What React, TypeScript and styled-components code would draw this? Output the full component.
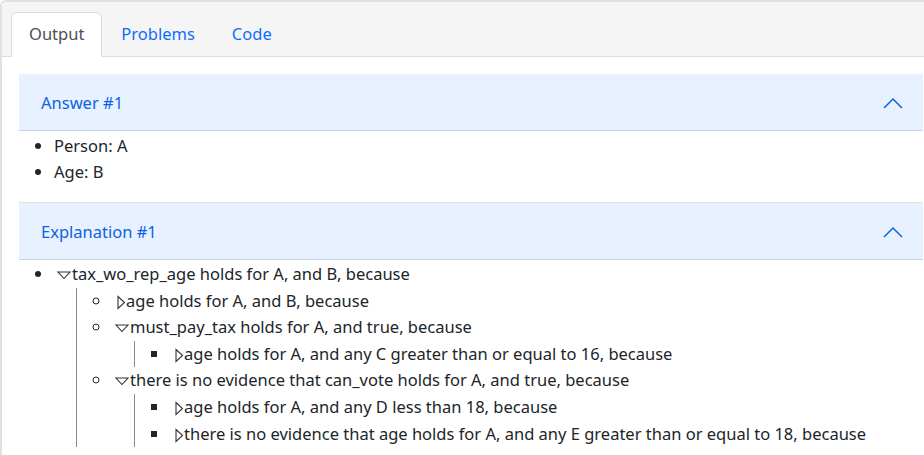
import React from "react";
import styled, { createGlobalStyle } from "styled-components";

const GlobalStyle = createGlobalStyle`
  html, body {
    margin: 0;
    padding: 0;
    background: #ffffff;
    overflow: hidden;
  }
  body {
    font-family: "Noto Sans", "Open Sans", sans-serif;
    font-size: 16.5px;
    color: #212529;
  }
  * { box-sizing: border-box; }
`;

const Card = styled.div`
  width: 942px;
  height: 455px;
  border: 2px solid #e1e1e1;
  border-bottom: 0;
  border-radius: 6px 6px 0 0;
  overflow: hidden;
  background: #ffffff;
`;

const TabBar = styled.div`
  display: flex;
  padding: 10px 9px 0;
  background: #f5f5f5;
  border-bottom: 1px solid #dcdcdc;
`;

const Tab = styled.div<{ $active?: boolean }>`
  padding: 9px 17px 10px;
  line-height: 24px;
  margin-bottom: -1px;
  margin-right: 1px;
  border: 1px solid ${(p) => (p.$active ? "#dcdcdc" : "transparent")};
  border-bottom-color: ${(p) => (p.$active ? "#ffffff" : "transparent")};
  border-radius: 6px 6px 0 0;
  background: ${(p) => (p.$active ? "#ffffff" : "transparent")};
  color: ${(p) => (p.$active ? "#495057" : "#0d6efd")};
  cursor: pointer;
`;

const Content = styled.div`
  padding: 17px 17px 0;
`;

const Item = styled.section`
  & + & {
    border-top: 1px solid #dfdfdf;
  }
`;

const Header = styled.div`
  display: flex;
  align-items: center;
  height: 57px;
  padding: 17px 20px 16px 22px;
  line-height: 24px;
  background: #e7f1ff;
  color: #0c63e4;
  box-shadow: inset 0 -1px 0 #c9d2de;
`;

const HeaderTitle = styled.span`
  flex: 1;
`;

const ChevronSvg = styled.svg`
  width: 20px;
  height: 20px;
  flex: none;
  margin-top: -1px;
`;

const AnswerList = styled.ul`
  margin: 0 0 17px;
  padding: 2px 0 0 35px;
  line-height: 26px;
  list-style: disc;
`;

const Tree = styled.ul<{ $level: number }>`
  margin: 0;
  line-height: 26.6px;
  padding-left: 35px;
  list-style: ${(p) => (p.$level === 1 ? "disc" : p.$level === 2 ? "circle" : "square")};
  ${(p) =>
    p.$level > 1
      ? `margin-left: 22px; border-left: 1px solid #8a8a8a;`
      : `padding-top: 1px;`}
`;

const Node = styled.li`
  white-space: nowrap;
`;

const ToggleSvg = styled.svg<{ $open: boolean }>`
  display: inline-block;
  overflow: visible;
  vertical-align: ${(p) => (p.$open ? "1px" : "-2px")};
`;

const Chevron = () => (
  <ChevronSvg viewBox="0 0 20 20" fill="none">
    <polyline points="1,15 10,6 19,15" stroke="#0c63e4" strokeWidth="1.5" />
  </ChevronSvg>
);

const Toggle = ({ open }: { open: boolean }) =>
  open ? (
    <ToggleSvg $open width="18" height="8" viewBox="0 0 18 8">
      <polygon points="4,1 16,1 10,7.5" fill="none" stroke="#333333" strokeWidth="1.1" strokeLinejoin="miter" />
    </ToggleSvg>
  ) : (
    <ToggleSvg $open={false} width="14" height="13" viewBox="0 0 14 13">
      <polygon points="6,0.5 12.5,6.5 6,12.5" fill="none" stroke="#333333" strokeWidth="1.1" strokeLinejoin="miter" />
    </ToggleSvg>
  );

type TreeNode = { text: string; children?: TreeNode[] };

const explanation: TreeNode[] = [
  {
    text: "tax_wo_rep_age holds for A, and B, because",
    children: [
      { text: "age holds for A, and B, because" },
      {
        text: "must_pay_tax holds for A, and true, because",
        children: [{ text: "age holds for A, and any C greater than or equal to 16, because" }],
      },
      {
        text: "there is no evidence that can_vote holds for A, and true, because",
        children: [
          { text: "age holds for A, and any D less than 18, because" },
          { text: "there is no evidence that age holds for A, and any E greater than or equal to 18, because" },
        ],
      },
    ],
  },
];

const TreeList = ({ nodes, level }: { nodes: TreeNode[]; level: number }) => (
  <Tree $level={level}>
    {nodes.map((n, i) => (
      <Node key={i}>
        <Toggle open={!!n.children} />
        {n.text}
        {n.children && <TreeList nodes={n.children} level={level + 1} />}
      </Node>
    ))}
  </Tree>
);

export default function App() {
  return (
    <>
      <GlobalStyle />
      <Card>
        <TabBar>
          <Tab $active>Output</Tab>
          <Tab>Problems</Tab>
          <Tab>Code</Tab>
        </TabBar>
        <Content>
          <Item>
            <Header>
              <HeaderTitle>Answer #1</HeaderTitle>
              <Chevron />
            </Header>
            <AnswerList>
              <li>Person: A</li>
              <li>Age: B</li>
            </AnswerList>
          </Item>
          <Item>
            <Header>
              <HeaderTitle>Explanation #1</HeaderTitle>
              <Chevron />
            </Header>
            <TreeList nodes={explanation} level={1} />
          </Item>
        </Content>
      </Card>
    </>
  );
}
